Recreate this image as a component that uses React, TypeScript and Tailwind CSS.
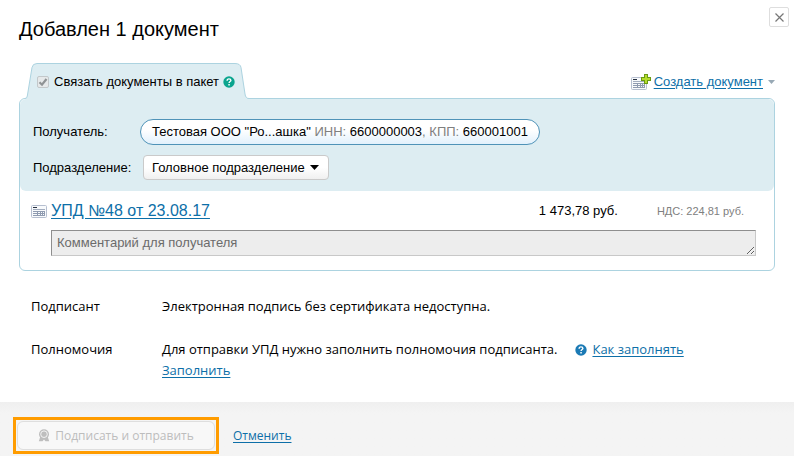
import type { ReactNode } from 'react';

const linkClass = 'text-[#0d6fa8] underline underline-offset-2 hover:text-[#c33]';

// small form sheet, used in the list and as the base of the "create" icon
function DocIcon({ withPlus = false }: { withPlus?: boolean }) {
  return (
    <svg
      className="shrink-0"
      width={withPlus ? 20 : 16}
      height={withPlus ? 16 : 13}
      viewBox={withPlus ? '0 -3 20 16' : '0 0 16 13'}
      aria-hidden="true"
    >
      <rect x="0.5" y="0.5" width="15" height="12" rx="1" fill="#f8fafc" stroke="#b6bfd0" />
      <path d="M2 2h4v1H2z" fill="#26303f" />
      <path d="M2 4h12v1H2z" fill="#a3adbf" />
      <path d="M2 6h12v5H2z" fill="#8f9bb0" />
      <path d="M2 7h4v1H2zM2 9h4v1H2zM7 7h2v1H7zM10 7h1v1h-1zM12 7h1v1h-1zM7 9h2v1H7zM10 9h1v1h-1zM12 9h1v1h-1z" fill="#f8fafc" />
      {withPlus && (
        <>
          <path d="M13 -3h4v3h3v4h-3v3h-4v-3h-3v-4h3z" fill="#6a9a14" />
          <path d="M14 -2h2v3h3v2h-3v3h-2v-3h-3v-2h3z" fill="#b4dc2c" />
        </>
      )}
    </svg>
  );
}

function HelpIcon({ className }: { className: string }) {
  return (
    <svg className={className} width="12" height="12" viewBox="0 0 12 12" aria-hidden="true">
      <circle cx="6" cy="6" r="5.7" fill="currentColor" />
      <path
        d="M4.1 4.7C4.1 3.4 4.9 2.9 6 2.9s1.9.6 1.9 1.5C7.900 5.500 6.100 5.600 6.100 7"
        fill="none"
        stroke="#fff"
        strokeWidth="1.4"
      />
      <rect x="5.300" y="8" width="1.500" height="1.500" fill="#fff" />
    </svg>
  );
}

function MedalIcon() {
  return (
    <svg width="12" height="13" viewBox="0 0 12 13" aria-hidden="true">
      <path d="M2.500 7 .8 12.300h3.700L6 10.500l1.500 1.800h3.700L9.500 7z" fill="#bebebe" />
      <circle cx="6" cy="5.200" r="5" fill="#bebebe" />
      <circle cx="6" cy="5.200" r="3.300" fill="none" stroke="#f8f8f8" strokeWidth="0.900" />
    </svg>
  );
}

function Tab({ children }: { children: ReactNode }) {
  return (
    <div className="relative z-10 ml-1.5 -mb-px flex h-9">
      <svg className="shrink-0" width="12" height="36" viewBox="0 0 12 36" aria-hidden="true">
        <path d="M0 36v-.5Q2 35.500 2.300 33L7 4.500Q7.700.5 12 .5V36z" fill="#ddedf2" />
        <path d="M0 35.500Q2 35.500 2.300 33L7 4.500Q7.700.5 12 .5" fill="none" stroke="#acd3e0" />
      </svg>
      <div className="flex items-center border-t border-[#acd3e0] bg-[#ddedf2]">{children}</div>
      <svg className="shrink-0" width="14" height="36" viewBox="0 0 14 36" aria-hidden="true">
        <path d="M0 .5Q5.300.5 6 4.500L10 31Q10.600 35.500 14 35.500V36H0z" fill="#ddedf2" />
        <path d="M0 .5Q5.300.5 6 4.500L10 31Q10.600 35.500 14 35.500" fill="none" stroke="#acd3e0" />
      </svg>
    </div>
  );
}

export default function App() {
  return (
    <div className="flex min-h-screen flex-col bg-white font-['Liberation_Sans',Arial,sans-serif] text-[13px] leading-4 text-black">
      <header className="flex items-start justify-between pt-[7px] pr-[5px] pl-[19px]">
        <h1 className="pt-2 text-[20px] leading-7">Добавлен 1 документ</h1>
        <button
          type="button"
          aria-label="Закрыть"
          className="flex size-5 items-center justify-center rounded-xs border border-[#dedede] bg-white"
        >
          <svg width="9" height="9" viewBox="0 0 9 9" aria-hidden="true">
            <path d="M.5.5l8 8M8.500.5l-8 8" stroke="#777" strokeWidth="1.200" />
          </svg>
        </button>
      </header>

      <main className="px-[19px] pt-5">
        <div className="flex items-end justify-between">
          <Tab>
            <label className="flex items-center gap-[5px] whitespace-nowrap">
              <span className="relative flex">
                <input
                  type="checkbox"
                  defaultChecked
                  disabled
                  className="size-3 appearance-none rounded-xs border border-[#c3c8ca] bg-[#e6e9ea]"
                />
                <svg className="absolute inset-0" width="12" height="12" viewBox="0 0 12 12" aria-hidden="true">
                  <path d="M2.500 6.300 5 8.700 9.500 3" fill="none" stroke="#8f9395" strokeWidth="2.200" />
                </svg>
              </span>
              Связать документы в пакет
            </label>
            <HelpIcon className="ml-1 text-[#0aa48e]" />
          </Tab>
          <button type="button" className="mb-2 flex items-center gap-[3px]">
            <DocIcon withPlus />
            <span className={linkClass}>Создать документ</span>
            <svg className="ml-0.5" width="7" height="4" viewBox="0 0 7 4" aria-hidden="true">
              <path d="M0 0h7L3.500 4z" fill="#98a9b5" />
            </svg>
          </button>
        </div>

        <section className="rounded-md border border-[#acd3e0]">
          <div className="flex flex-col gap-2.5 rounded-md bg-[#ddedf2] px-[13px] pt-5 pb-[11px]">
            <div className="flex items-center">
              <span className="w-[107px]">Получатель:</span>
              <button
                type="button"
                className="h-[26px] rounded-full border border-[#4f93b8] bg-linear-to-b from-white from-40% to-[#e2f1fc] px-[11px] whitespace-nowrap"
              >
                Тестовая ООО "Ро...ашка" <span className="text-[#808080]">ИНН:</span> 6600000003
                <span className="text-[#808080]">, КПП:</span> 660001001
              </button>
            </div>
            <div className="flex items-center">
              <label htmlFor="unit" className="w-[110px]">
                Подразделение:
              </label>
              <span className="relative flex items-center">
                <select
                  id="unit"
                  className="h-[25px] w-[186px] appearance-none rounded-sm border border-[#cacaca] bg-linear-to-b from-white from-50% to-[#f0f0f0] pl-2"
                >
                  <option>Головное подразделение</option>
                </select>
                <svg
                  className="pointer-events-none absolute right-2.5"
                  width="9"
                  height="5"
                  viewBox="0 0 9 5"
                  aria-hidden="true"
                >
                  <path d="M0 0h9L4.500 5z" fill="#000" />
                </svg>
              </span>
            </div>
          </div>

          <div className="pt-2.5 pr-[18px] pb-[14px] pl-[11px]">
            <div className="flex items-center">
              <DocIcon />
              <a href="#doc" className={`ml-1 text-[16px] leading-5 ${linkClass}`}>
                УПД №48 от 23.08.17
              </a>
              <span className="ml-auto">1 473,78 руб.</span>
              <span className="mr-3 ml-[39px] text-[11px] text-[#808080]">НДС: 224,81 руб.</span>
            </div>
            <div className="mt-[9px] flex pl-5">
              <textarea
                rows={1}
                disabled
                aria-label="Комментарий для получателя"
                placeholder="Комментарий для получателя"
                className="h-[26px] flex-1 resize border border-[#c8c8c8] border-t-[#8e8e8e] border-l-[#8e8e8e] bg-[#ededed] px-[5px] py-1 leading-4 placeholder:text-[#6b6b6b]"
              />
            </div>
          </div>
        </section>

        <dl className="grid grid-cols-[131px_1fr] gap-y-[22px] px-3 pt-[25px] pb-[21px] font-['Open_Sans','Noto_Sans',sans-serif] leading-[21px]">
          <dt>Подписант</dt>
          <dd>Электронная подпись без сертификата недоступна.</dd>
          <dt>Полномочия</dt>
          <dd>
            <div className="flex items-center">
              Для отправки УПД нужно заполнить полномочия подписанта.
              <HelpIcon className="mr-[5px] ml-[18px] text-[#1b7ab5]" />
              <a href="#how" className={linkClass}>
                Как заполнять
              </a>
            </div>
            <a href="#fill" className={linkClass}>
              Заполнить
            </a>
          </dd>
        </dl>
      </main>

      <footer className="flex flex-1 items-start gap-[14px] bg-linear-to-b from-[#efefef] to-[#f4f4f4] to-20% px-[13px] pt-[15px] font-['Open_Sans','Noto_Sans',sans-serif] text-[12px]">
        <div className="border-3 border-[#ff9c00] p-px">
          <button
            type="button"
            disabled
            className="flex h-[29px] w-[198px] items-center justify-center gap-[5px] rounded-md border border-[#dedede] bg-[#f8f8f8] text-[#bdbdbd]"
          >
            <MedalIcon />
            Подписать и отправить
          </button>
        </div>
        <a href="#cancel" className={`py-[11px] ${linkClass}`}>
          Отменить
        </a>
      </footer>
    </div>
  );
}
